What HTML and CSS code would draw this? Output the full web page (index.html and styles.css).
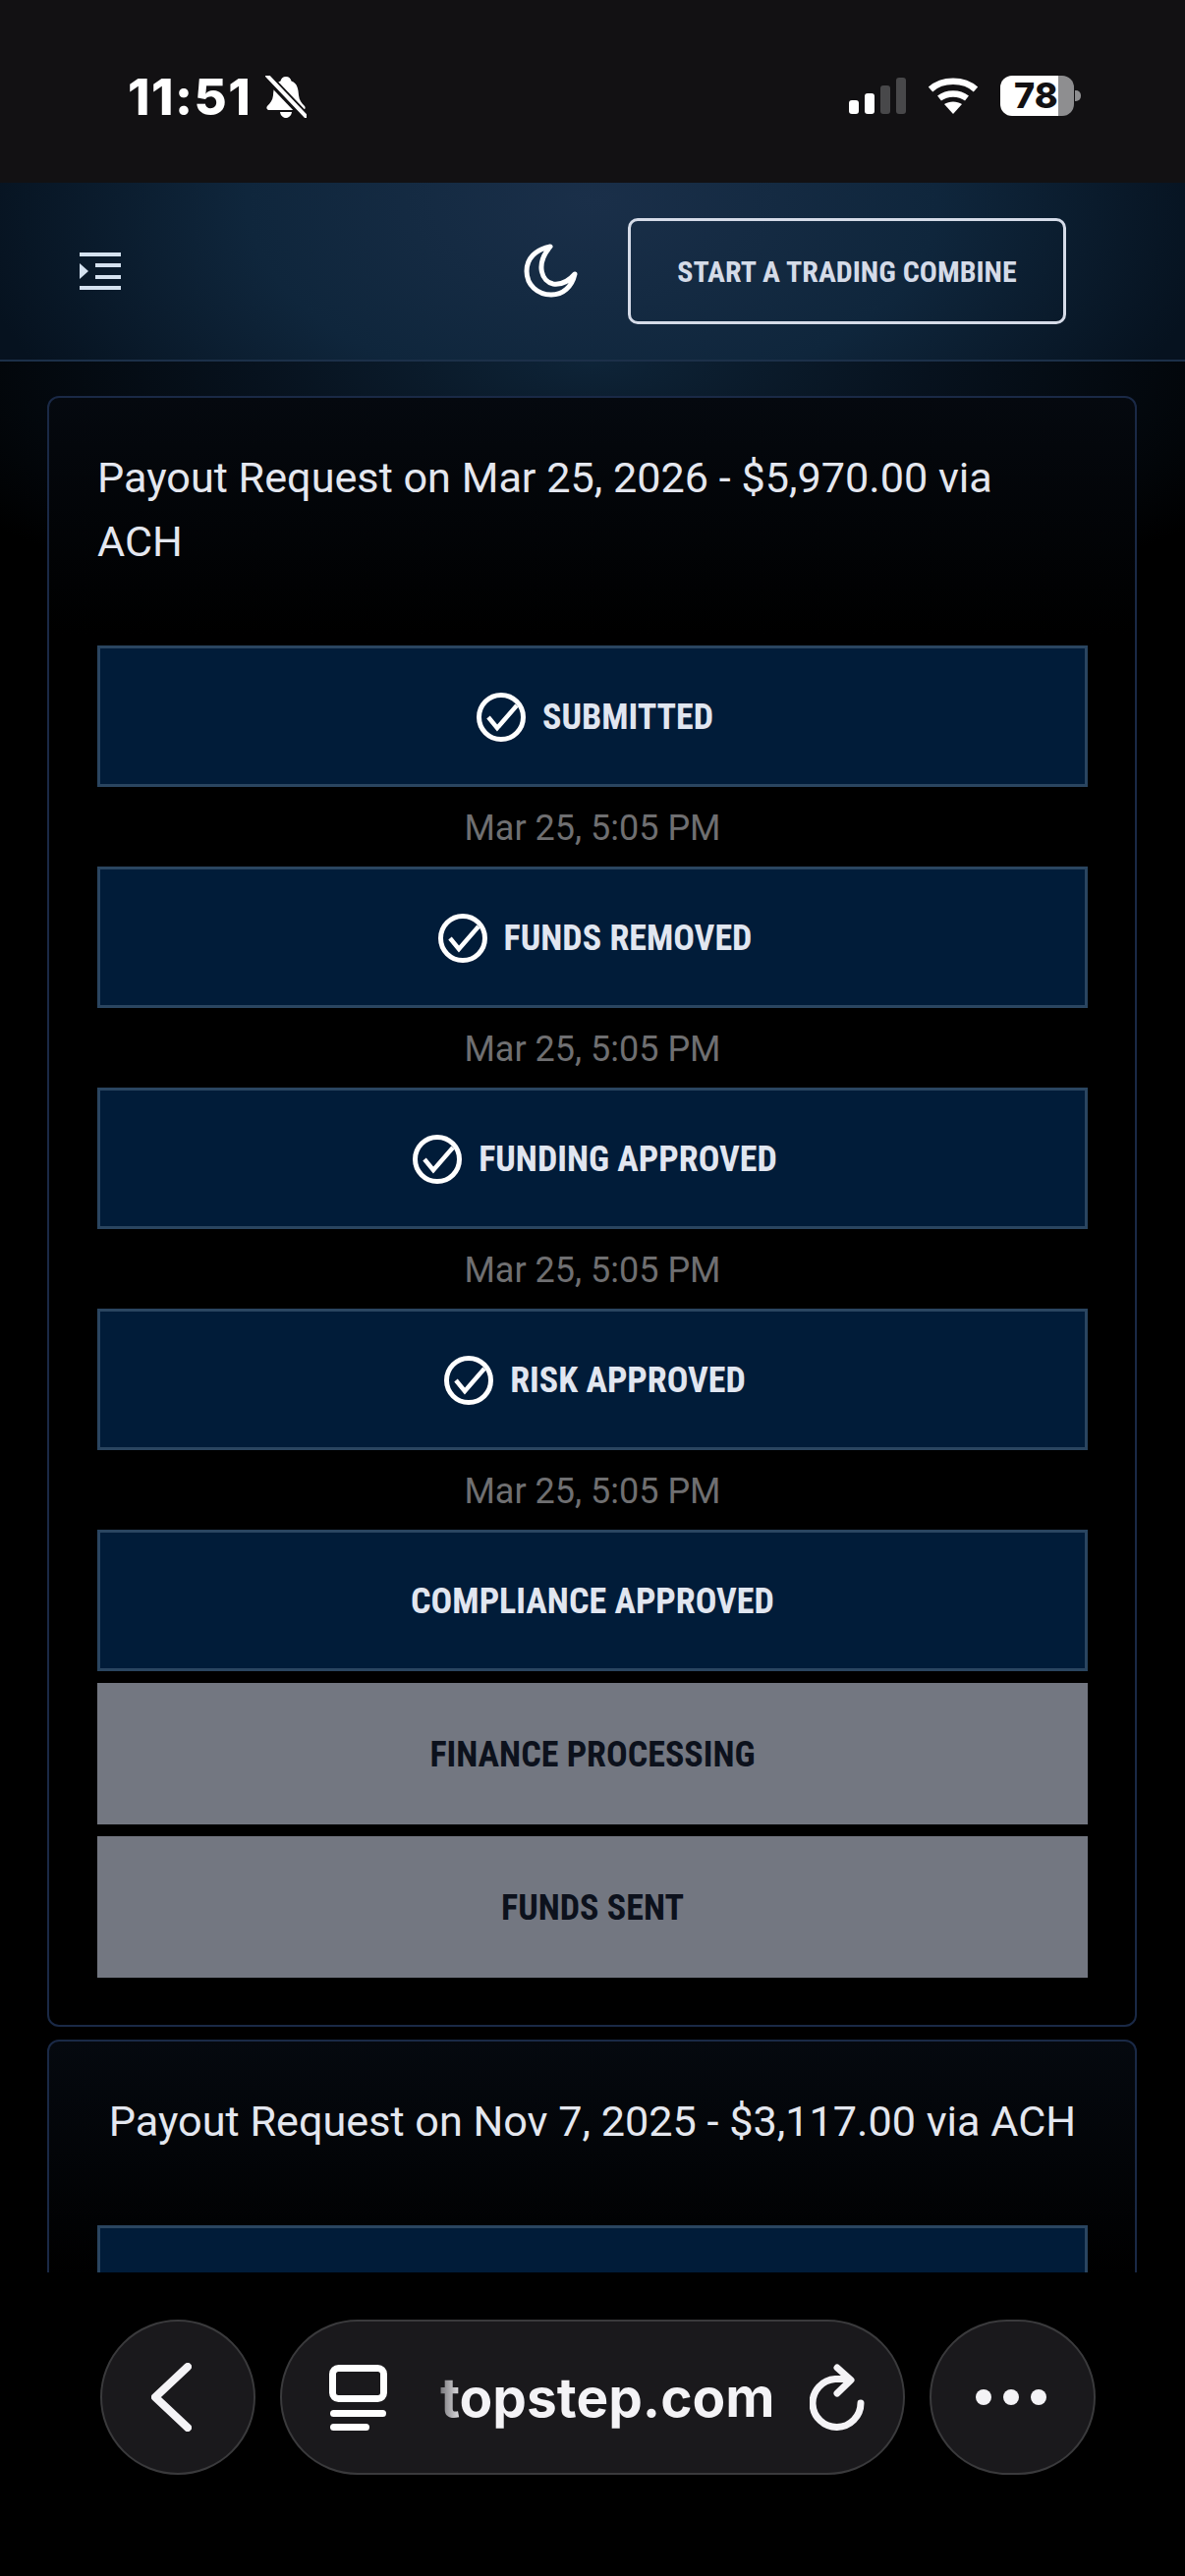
FILE: index.html
```html
<!DOCTYPE html>
<html lang="en">
<head>
<meta charset="utf-8">
<title>Payouts</title>
<link rel="stylesheet" href="styles.css">
</head>
<body>
<div class="screen">
  <header class="status">
    <div class="status-left">
      <span class="clock">11:51</span>
      <svg class="bell" viewBox="0 0 42 43"><path d="M21 1c-3 0-5 2-5.500 4.500C9 8 8.500 14 8 20c-.5 5-3 8-6 11-1.500 2 0 4 2 4h34c2 0 3.500-2 2-4-3-3-5.500-6-6-11-.5-6-1-12-7.500-14.500C26 3 24 1 21 1zM15 37c.5 3.500 3 6 6 6s5.500-2.500 6-6z" fill="#fff"/><path d="M1 0 42 43" stroke="#121113" stroke-width="9"/><path d="M2 0 41 41" stroke="#fff" stroke-width="4" stroke-linecap="round"/></svg>
    </div>
    <div class="status-right">
      <svg class="signal" viewBox="0 0 58 37"><rect y="23" width="10" height="14" rx="3" fill="#fff"/><rect x="16" y="16" width="10" height="21" rx="3" fill="#fff"/><rect x="32" y="8" width="10" height="29" rx="3" fill="#48484a"/><rect x="48" width="10" height="37" rx="3" fill="#48484a"/></svg>
      <svg class="wifi" viewBox="0 0 52 37"><path d="M3 12C15 1 37 1 49 12M12 21c8-6 20-6 28 0" fill="none" stroke="#fff" stroke-width="6.500"/><path d="M17 27c5-3.500 13-3.500 18 0l-9 10z" fill="#fff"/></svg>
      <div class="battery"><span class="battery-level">78</span><i class="battery-nub"></i></div>
    </div>
  </header>

  <nav class="topbar">
    <svg class="menu" viewBox="0 0 42 38"><path d="M0 0h42v4H0zM16 11h26v4H16zM16 23h26v4H16zM0 34h42v4H0z" fill="#d5e2f0"/><path d="M0 11l9 8-9 8z" fill="#d5e2f0"/></svg>
    <div class="topbar-actions">
      <svg class="moon" viewBox="0 0 55 55"><path d="M27 3C12 6 3 15 3 28c0 14 11 24 25 24 12 0 21-8 24-21-6 7-14 11-22 10C19 39 11 22 27 3z" fill="none" stroke="#fff" stroke-width="5" stroke-linejoin="round"/></svg>
      <a class="combine">START A TRADING COMBINE</a>
    </div>
  </nav>

  <main class="payouts">
    <section class="card">
      <h2 class="card-title card-title-long">Payout Request on Mar 25, 2026 - $5,970.00 via ACH</h2>
      <div class="steps">
        <div class="step done"><svg class="tick" viewBox="0 0 50 50"><circle cx="25" cy="25" r="22.500" fill="none" stroke="#fff" stroke-width="5"/><path d="M12 25l9 11 20-23" fill="none" stroke="#fff" stroke-width="4.500"/></svg>SUBMITTED</div>
        <p class="stamp">Mar 25, 5:05 PM</p>
        <div class="step done"><svg class="tick" viewBox="0 0 50 50"><circle cx="25" cy="25" r="22.500" fill="none" stroke="#fff" stroke-width="5"/><path d="M12 25l9 11 20-23" fill="none" stroke="#fff" stroke-width="4.500"/></svg>FUNDS REMOVED</div>
        <p class="stamp">Mar 25, 5:05 PM</p>
        <div class="step done"><svg class="tick" viewBox="0 0 50 50"><circle cx="25" cy="25" r="22.500" fill="none" stroke="#fff" stroke-width="5"/><path d="M12 25l9 11 20-23" fill="none" stroke="#fff" stroke-width="4.500"/></svg>FUNDING APPROVED</div>
        <p class="stamp">Mar 25, 5:05 PM</p>
        <div class="step done"><svg class="tick" viewBox="0 0 50 50"><circle cx="25" cy="25" r="22.500" fill="none" stroke="#fff" stroke-width="5"/><path d="M12 25l9 11 20-23" fill="none" stroke="#fff" stroke-width="4.500"/></svg>RISK APPROVED</div>
        <p class="stamp">Mar 25, 5:05 PM</p>
        <div class="step done">COMPLIANCE APPROVED</div>
        <div class="step pending">FINANCE PROCESSING</div>
        <div class="step pending">FUNDS SENT</div>
      </div>
    </section>
    <section class="card">
      <h2 class="card-title">Payout Request on Nov 7, 2025 - $3,117.00 via ACH</h2>
      <div class="steps">
        <div class="step done"><svg class="tick" viewBox="0 0 50 50"><circle cx="25" cy="25" r="22.500" fill="none" stroke="#fff" stroke-width="5"/><path d="M12 25l9 11 20-23" fill="none" stroke="#fff" stroke-width="4.500"/></svg>SUBMITTED</div>
      </div>
    </section>
  </main>

  <footer class="browserbar">
    <button class="round back"><svg class="chev" viewBox="0 0 41 70"><path d="M37 4 4 35l33 31" fill="none" stroke="#f4f3f6" stroke-width="8" stroke-linecap="round" stroke-linejoin="round"/></svg></button>
    <div class="address">
      <svg class="tabs" viewBox="0 0 59 67"><rect x="3.500" y="3.500" width="52" height="31" rx="6" fill="none" stroke="#fff" stroke-width="7"/><rect x="1" y="46" width="57" height="7" rx="3.500" fill="#fff"/><rect x="1" y="60" width="40" height="7" rx="3.500" fill="#fff"/></svg>
      <span class="host">topstep.com</span>
      <svg class="reload" viewBox="0 0 56 68"><path d="M52 40a24.500 24.500 0 1 1-26-24.500h10" fill="none" stroke="#f4f3f6" stroke-width="7" stroke-linecap="round"/><path d="M28 4l14 12.500L28 30" fill="none" stroke="#f4f3f6" stroke-width="7" stroke-linecap="round" stroke-linejoin="round"/></svg>
    </div>
    <button class="round more"><i class="dot"></i><i class="dot"></i><i class="dot"></i></button>
  </footer>
</div>
</body>
</html>
```

FILE: styles.css
```css
* { box-sizing: border-box; }

html, body {
  margin: 0;
  background: #000;
}

.screen {
  position: relative;
  width: 1206px;
  height: 2622px;
  overflow: hidden;
  background: #000;
  font-family: Roboto, "Liberation Sans", sans-serif;
}

/* Phone status bar */
.status {
  height: 186px;
  background: #121113;
  display: flex;
  justify-content: space-between;
  align-items: flex-start;
  padding: 77px 113px 0 130px;
}

.status-left {
  display: flex;
  align-items: flex-start;
  gap: 14px;
}

.clock {
  font-family: Inter, sans-serif;
  font-weight: 800;
  font-size: 51px;
  line-height: 43px;
  color: #fff;
  letter-spacing: 1.500px;
}

.bell { width: 42px; height: 43px; }

.status-right {
  display: flex;
  align-items: flex-start;
  gap: 22px;
}

.signal { width: 58px; height: 37px; margin-top: 2px; }
.wifi { width: 52px; height: 37px; margin-top: 2px; }

.battery {
  position: relative;
  width: 75px;
  height: 41px;
  border-radius: 12px;
  background: linear-gradient(90deg, #fff 0 59px, #8e8e90 59px);
}

.battery-level {
  display: block;
  padding-left: 14px;
  font-family: Inter, sans-serif;
  font-weight: 800;
  font-size: 36px;
  line-height: 41px;
  color: #121113;
}

.battery-nub {
  position: absolute;
  right: -7px;
  top: 15px;
  width: 6px;
  height: 11px;
  border-radius: 0 5px 5px 0;
  background: #8e8e90;
}

/* Site navigation */
.topbar {
  height: 182px;
  padding: 36px 121px 0 81px;
  display: flex;
  justify-content: space-between;
  align-items: flex-start;
  border-bottom: 2px solid #1c3049;
  background: radial-gradient(ellipse 640px 360px at 50% 10%, #1a2f49 0%, #0f263c 55%, #06121f 100%);
}

.menu { width: 42px; height: 38px; margin-top: 35px; }

.topbar-actions {
  display: flex;
  align-items: flex-start;
  gap: 51px;
}

.moon { width: 55px; height: 55px; margin-top: 26px; }

.combine {
  width: 446px;
  height: 108px;
  display: flex;
  align-items: center;
  justify-content: center;
  border: 3px solid #d5dbe8;
  border-radius: 10px;
  font-weight: 700;
  font-size: 30px;
  font-stretch: 75%;
  color: #d5dbe8;
}

/* Payout list, with the header glow fading out behind it */
.payouts {
  padding: 35px 49px 0 48px;
  display: flex;
  flex-direction: column;
  gap: 13px;
  background: radial-gradient(ellipse 760px 280px at 50% 0, #0e2438 0%, #07121e 45%, #000 100%) top / 100% 280px no-repeat, #000;
}

.card {
  padding: 49px 48px 48px 49px;
  border: 2px solid #1a2946;
  border-radius: 12px;
  background: linear-gradient(180deg, #05090f 0, #000 240px);
}

.card-title {
  margin: 0 0 73px;
  font-weight: 400;
  font-size: 43.200px;
  line-height: 65px;
  color: #e4e7ef;
  text-align: center;
}

/* Two-line titles sit against the left edge of the step list */
.card-title-long {
  padding-right: 40px;
  text-align: left;
}

.steps {
  display: flex;
  flex-direction: column;
  gap: 12px;
}

.step {
  height: 144px;
  padding-top: 2px;
  display: flex;
  align-items: center;
  justify-content: center;
  gap: 17px;
  font-weight: 700;
  font-size: 36px;
  font-stretch: 75%;
}

.done {
  background: #011c39;
  border: 3px solid #2a4560;
  color: #e1e6f0;
}

.pending {
  background: #737781;
  color: #0c111c;
}

.tick { width: 50px; height: 50px; flex: none; margin-left: 5px; }

.stamp {
  margin: -12px 0;
  height: 81px;
  padding-top: 2px;
  display: flex;
  align-items: center;
  justify-content: center;
  font-size: 36px;
  color: #6f6f71;
}

/* Browser toolbar pinned over the page */
.browserbar {
  position: absolute;
  left: 0;
  right: 0;
  bottom: 0;
  height: 309px;
  padding: 48px 91px 0 102px;
  display: flex;
  justify-content: space-between;
  align-items: flex-start;
  background: #000;
}

.round, .address {
  height: 158px;
  background: #1a191c;
  border: 2px solid #3a3a3c;
  border-radius: 79px;
}

.round {
  padding: 0;
  display: flex;
  align-items: center;
  justify-content: center;
}

.back { width: 158px; }
.chev { width: 41px; height: 70px; margin-right: 14px; }

.address {
  width: 636px;
  display: flex;
  align-items: center;
  padding-left: 48px;
}

.tabs { width: 59px; height: 67px; flex: none; }

.host {
  margin-left: 54px;
  width: 339px;
  font-family: Inter, sans-serif;
  font-weight: 700;
  font-size: 55px;
  line-height: 70px;
  white-space: nowrap;
  color: transparent;
  background: linear-gradient(90deg, #77767a 0, #f4f3f6 24px);
  -webkit-background-clip: text;
  background-clip: text;
}

.reload { width: 56px; height: 68px; flex: none; margin-left: 37px; }

.more { width: 169px; gap: 12px; padding-right: 3px; }

.dot {
  width: 16px;
  height: 16px;
  border-radius: 50%;
  background: #f4f3f6;
}
```
